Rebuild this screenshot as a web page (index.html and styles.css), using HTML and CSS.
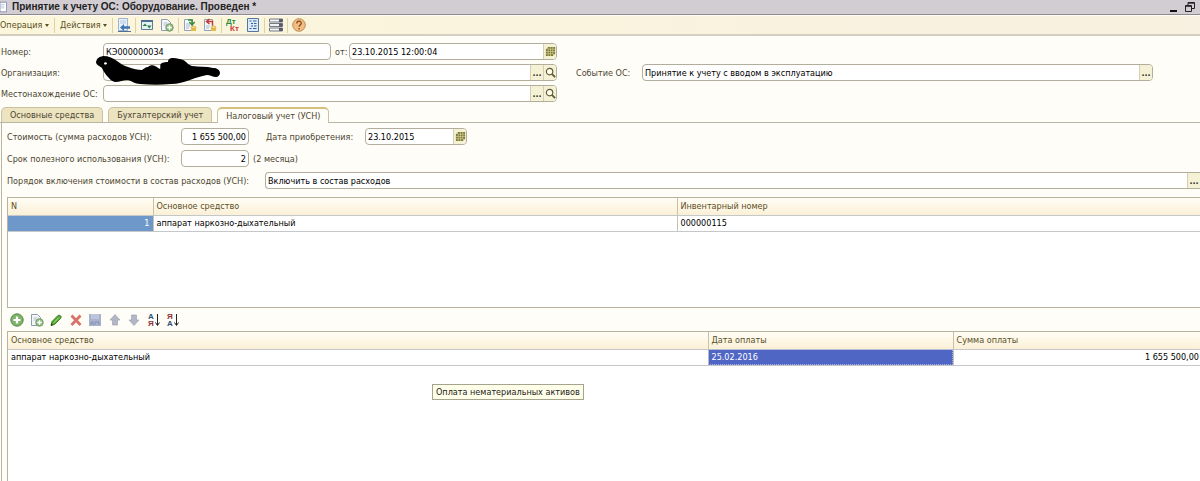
FILE: index.html
```html
<!DOCTYPE html>
<html lang="ru">
<head>
  <meta charset="UTF-8">
  <meta name="viewport" content="width=device-width, initial-scale=1.0">
  <title>Принятие к учету ОС</title>
  <link rel="stylesheet" href="styles.css">
</head>
<body>

  <svg class="symbols">
    <symbol id="calendar" viewBox="0 0 12 12">
      <path d="M3 1h8v8h-2v2H1V3h2z" fill="#7d7a3a"/>
      <path d="M1 6h10M1 8.500h8M3.500 3v8M6 1v10M8.500 1v8M3 3.500h8" stroke="#d8d39a" stroke-width=".7"/>
    </symbol>
    <symbol id="lens" viewBox="0 0 12 12">
      <circle cx="5" cy="5" r="3.500" fill="#fffef0" stroke="#5f5c34" stroke-width="1.300"/>
      <path d="M7.500 7.500 11 11" stroke="#5f5c34" stroke-width="2"/>
    </symbol>
    <symbol id="copy" viewBox="0 0 14 14">
      <path d="M1.500 1.500h6l3 3v8h-9z" fill="#f4f6fa" stroke="#8e9bb0"/>
      <path d="M3.500 5h4M3.500 7h3" stroke="#b4bdcc"/>
      <circle cx="9.500" cy="9.500" r="3.800" fill="#8fb981" stroke="#6b945f" stroke-width=".8"/>
      <path d="M9.500 7.200v4.600M7.200 9.500h4.600" stroke="#fff" stroke-width="1.500"/>
    </symbol>
  </svg>

  <header class="titlebar">
    <svg class="doc" viewBox="0 0 8 12"><path d="M0 .5h7.500v11H0z" fill="#fff" stroke="#7b8cab"/><path d="M0 3h5M0 5h5M0 7h5" stroke="#b9c7dc"/></svg>
    <h1>Принятие к учету ОС: Оборудование. Проведен *</h1>
    <button class="win" aria-label="Свернуть"><svg viewBox="0 0 12 12"><path d="M2 10h7" stroke="#111" stroke-width="2"/></svg></button>
    <button class="win" aria-label="Восстановить"><svg viewBox="0 0 12 12"><path d="M4 4V1.500h6.500v6H8M4 2.200h6.500" fill="none" stroke="#222"/><path d="M1.500 4.500h6v6h-6zM1.500 5.300h6" fill="none" stroke="#222"/></svg></button>
  </header>

  <nav class="toolbar">
    <button class="menu first">Операция <i></i></button>
    <span class="sep"></span>
    <button class="menu">Действия <i></i></button>
    <span class="sep"></span>
    <button class="tool" aria-label="Найти в списке"><svg viewBox="0 0 14 14"><path d="M1.500.5h9v12h-9z" fill="#e8f0fa" stroke="#9db3cf"/><path d="M3 3h6M3 5h6" stroke="#b7c8dd"/><path d="M3 9.500 7 6v2.300h6v2.400H7V13z" fill="#3d74b4"/><path d="M1 13.500h13" stroke="#4f6f98"/></svg></button>
    <span class="sep"></span>
    <button class="tool" aria-label="Перечитать"><svg viewBox="0 0 14 14"><path d="M1.500 2.500h11v9h-11z" fill="#e6f4f1" stroke="#5b7d98"/><path d="M1 3h12" stroke="#4a6f92" stroke-width="2"/><path d="M2.500 8 5 5.500 7 8zM7 7.500h4.500L9.300 10.500z" fill="#2b7b51"/></svg></button>
    <button class="tool" aria-label="Скопировать"><svg><use href="#copy"/></svg></button>
    <span class="sep"></span>
    <button class="tool" aria-label="Провести"><svg viewBox="0 0 14 14"><path d="M1.500 1.500h8v11h-8z" fill="#f5f8fc" stroke="#90a2bb"/><path d="M3 6h4M3 8h4M3 10h3" stroke="#a9b8cb"/><path d="M5 2h4v3.500M6.300 4 9 7l2.700-3" fill="none" stroke="#3a8d3a" stroke-width="1.500"/><path d="M8 9.500h5v3.500H8z" fill="#e5bd46"/><ellipse cx="10.500" cy="9.300" rx="2.500" ry="1.200" fill="#f6df88" stroke="#c59a30" stroke-width=".6"/></svg></button>
    <button class="tool" aria-label="Отмена проведения"><svg viewBox="0 0 14 14"><path d="M1.500 1.500h8v11h-8z" fill="#f5f8fc" stroke="#90a2bb"/><path d="M3 8h4M3 10h3" stroke="#a9b8cb"/><path d="M9.500 7.500V3.500H4M6.500 1 3.500 3.500l3 2.500" fill="none" stroke="#c93a2e" stroke-width="1.500"/><path d="M8 9.500h5v3.500H8z" fill="#e5bd46"/><ellipse cx="10.500" cy="9.300" rx="2.500" ry="1.200" fill="#f6df88" stroke="#c59a30" stroke-width=".6"/></svg></button>
    <span class="sep"></span>
    <button class="tool" aria-label="Проводки"><svg viewBox="0 0 14 14"><text x="0" y="6" class="glyph green">Дт</text><text x="4" y="13" class="glyph red">Кт</text></svg></button>
    <button class="tool" aria-label="Список"><svg viewBox="0 0 14 14"><path d="M1.500.5h11v13h-11z" fill="#dceafa" stroke="#54779f"/><path d="M3.500 3h2M7 3h3.500M5 5.500h2M8 5.500h2.500M5 8h2M8 8h2.500M3.500 10.500h2M7 10.500h3.500" stroke="#2f639b"/></svg></button>
    <span class="sep"></span>
    <button class="tool" aria-label="Реквизиты"><svg viewBox="0 0 14 14"><path d="M.5 1h13v3H.5zM.5 5.500h13v3H.5zM.5 10h13v3H.5z" fill="#f2f2f4" stroke="#777b88"/><path d="M10 1h3.500v3H10zM10 5.500h3.500v3H10zM10 10h3.500v3H10z" fill="#555a68"/></svg></button>
    <span class="sep"></span>
    <button class="tool" aria-label="Справка"><svg viewBox="0 0 14 14"><circle cx="7" cy="7" r="6.300" fill="#f0bd82" stroke="#b98650" stroke-width=".9"/><path d="M4.800 5.500c0-3 4.600-3 4.500-.2C9.300 7 7.100 6.800 7.100 8.800M7.100 10v1.500" fill="none" stroke="#8a4c1c" stroke-width="1.300"/></svg></button>
  </nav>

  <main>
    <section class="head">
      <div class="row">
        <label class="caption" for="number">Номер:</label>
        <div class="field number"><input id="number" value="КЭ000000034"></div>
        <label class="from" for="date">от:</label>
        <div class="field rest"><input id="date" value="23.10.2015 12:00:04"><button aria-label="Календарь"><svg><use href="#calendar"/></svg></button></div>
      </div>
      <div class="row">
        <label class="caption" for="org">Организация:</label>
        <div class="field rest"><input id="org"><button>...</button><button aria-label="Открыть"><svg><use href="#lens"/></svg></button></div>
        <svg class="scribble" viewBox="0 0 128 30"><path fill="#000" fill-rule="evenodd" d="M2 6C3 2 5 1 9 0c6 0 10 2 14 5 4 3 7 5 11 6 5 2 10 3 14 3 2-1 3-3 6-3 2-2 5-2 7-1 2 1 3 2 5 3 1-1-1-5 2-6 2-1 4-1 6-1 0-3 2-4 5-4 4 0 7 1 10 2 3 1 5 5 9 6 7 1 14 0 21 2 4 0 7 2 7 5 0 2-2 4-4 4-3 0-6-2-9-2-6 1-12 3-17 5-6 2-12 4-19 4-10 1-20 1-31 0-5 0-8-3-12-4-5 0-8 2-13 2-4-1-5-3-8-6-2-3-4-5-5-8C6 10 2 9 2 6zM10 8c1 1 3 1 3-1-1-1-3-1-3 1z"/></svg>
      </div>
      <div class="row">
        <label class="caption" for="place">Местонахождение ОС:</label>
        <div class="field rest"><input id="place"><button>...</button><button aria-label="Открыть"><svg><use href="#lens"/></svg></button></div>
      </div>
    </section>
    <section class="event row">
      <label for="event">Событие ОС:</label>
      <div class="field rest"><input id="event" value="Принятие к учету с вводом в эксплуатацию"><button>...</button></div>
    </section>
  </main>

  <div class="tabs">
    <button class="tab">Основные средства</button>
    <button class="tab">Бухгалтерский учет</button>
    <button class="tab active">Налоговый учет (УСН)</button>
  </div>

  <section class="panel">
    <div class="row">
      <label class="caption" for="cost">Стоимость (сумма расходов УСН):</label>
      <div class="field sum"><input id="cost" value="1 655 500,00"></div>
      <label class="buy" for="bought">Дата приобретения:</label>
      <div class="field day"><input id="bought" value="23.10.2015"><button aria-label="Календарь"><svg><use href="#calendar"/></svg></button></div>
    </div>
    <div class="row">
      <label class="caption" for="term">Срок полезного использования (УСН):</label>
      <div class="field sum"><input id="term" value="2"></div>
      <span>(2 месяца)</span>
    </div>
    <div class="row">
      <label class="order" for="order">Порядок включения стоимости в состав расходов (УСН):</label>
      <div class="field rest cut"><input id="order" value="Включить в состав расходов"><button>...</button></div>
    </div>

    <div class="grid assets">
      <table>
        <thead>
          <tr><th class="col-n">N</th><th class="col-name">Основное средство</th><th>Инвентарный номер</th></tr>
        </thead>
        <tbody>
          <tr><td class="num current">1</td><td>аппарат наркозно-дыхательный</td><td>000000115</td></tr>
        </tbody>
      </table>
    </div>

    <div class="commands">
      <button class="tool" aria-label="Добавить"><svg viewBox="0 0 14 14"><circle cx="7" cy="7" r="6.200" fill="#7fb46c" stroke="#568a4a"/><path d="M7 3.500v7M3.500 7h7" stroke="#fff" stroke-width="2.200"/></svg></button>
      <button class="tool" aria-label="Скопировать"><svg><use href="#copy"/></svg></button>
      <button class="tool" aria-label="Изменить"><svg viewBox="0 0 14 14"><path d="M2 12.500 3 8.500 9 2.500q2-1 3 1 .5 1-.5 2L5.500 11.500z" fill="#55a832" stroke="#2f7420" stroke-width=".9"/><path d="M5 9.500 10 4.500" stroke="#b6e48e"/><path d="M2 12.500 2.500 10.500 4 12z" fill="#222"/></svg></button>
      <button class="tool" aria-label="Удалить"><svg viewBox="0 0 14 14"><path d="M2.500 2.500 11.500 12M11.500 2.500 2.500 12" stroke="#d8736a" stroke-width="2.800"/></svg></button>
      <button class="tool" aria-label="Закончить редактирование"><svg viewBox="0 0 14 14"><path d="M1 1h12v12H1z" fill="#a9b3cd"/><path d="M3 1h8v5H3z" fill="#bcc5da"/><path d="M3 12V9h2v3M7 12V9h4v3" fill="none" stroke="#8491b3"/></svg></button>
      <button class="tool" aria-label="Вверх"><svg viewBox="0 0 14 14"><path d="M7 1.500 12 7H9.500v5h-5V7H2z" fill="#b3b6c4" stroke="#9fa3b4" stroke-width=".7"/></svg></button>
      <button class="tool" aria-label="Вниз"><svg viewBox="0 0 14 14"><path d="M7 12.500 12 7H9.500V2h-5v5H2z" fill="#b3b6c4" stroke="#9fa3b4" stroke-width=".7"/></svg></button>
      <button class="tool" aria-label="Сортировать по возрастанию"><svg viewBox="0 0 14 14"><text x="1" y="6" class="glyph blue">А</text><text x="1" y="13" class="glyph maroon">Я</text><path d="M10.500 1v11M8.500 9.500l2 3 2-3" fill="none" stroke="#222"/></svg></button>
      <button class="tool" aria-label="Сортировать по убыванию"><svg viewBox="0 0 14 14"><text x="1" y="6" class="glyph maroon">Я</text><text x="1" y="13" class="glyph blue">А</text><path d="M10.500 1v11M8.500 9.500l2 3 2-3" fill="none" stroke="#222"/></svg></button>
    </div>

    <div class="grid payments">
      <table>
        <thead>
          <tr><th>Основное средство</th><th class="col-date">Дата оплаты</th><th class="col-sum">Сумма оплаты</th></tr>
        </thead>
        <tbody>
          <tr><td>аппарат наркозно-дыхательный</td><td class="selected">25.02.2016</td><td class="num">1 655 500,00</td></tr>
        </tbody>
      </table>
      <div class="tooltip" role="tooltip">Оплата нематериальных активов</div>
    </div>
  </section>

</body>
</html>
```
FILE: styles.css
```css
* {
  box-sizing: border-box;
}

body {
  margin: 0;
  min-height: 100vh;
  display: flex;
  flex-direction: column;
  overflow: hidden;
  background: #fffdf7;
  color: #4b4632;
  font: 9px/14px "DejaVu Sans Condensed", "Liberation Sans", sans-serif;
}

button, input {
  font: inherit;
  color: inherit;
  margin: 0;
  padding: 0;
  border: 0;
  background: none;
}

.symbols {
  display: none;
}

/* window title */
.titlebar {
  display: flex;
  align-items: center;
  height: 15px;
  background: #d2cdd2;
  border-bottom: 1px solid #8f8a8d;
}

.titlebar h1 {
  flex: 1;
  margin: 0 0 0 5px;
  font: bold 10px/14px "Liberation Sans", Arial, sans-serif;
  color: #222;
}

.doc {
  width: 7px;
  height: 12px;
}

.win {
  width: 16px;
  height: 12px;
}

.win svg {
  display: block;
  width: 12px;
  height: 12px;
}

/* toolbars */
.toolbar {
  display: flex;
  align-items: center;
  height: 21px;
  background: linear-gradient(to right, #fbf6dc, #f8f0e0);
  border-top: 1px solid #fffdf5;
  border-bottom: 2px solid #d3cfc0;
}

.menu {
  padding: 0 4px;
  white-space: nowrap;
  color: #5a5020;
}

.menu.first {
  padding-left: 0;
}

.menu i {
  display: inline-block;
  border: 2px solid transparent;
  border-top: 3px solid #5a5020;
  border-bottom: 0;
  vertical-align: middle;
}

.sep {
  width: 1px;
  height: 15px;
  margin: 0 1px;
  background: #ddd3a8;
}

.tool {
  width: 14px;
  height: 16px;
  display: flex;
  align-items: center;
  justify-content: center;
}

.toolbar .tool {
  width: 20px;
}

.tool svg {
  width: 14px;
  height: 14px;
}

.glyph {
  font: bold 8px "Liberation Sans", Arial, sans-serif;
}

.green { fill: #2c8a3a; }
.red { fill: #cb3a34; }
.blue { fill: #2d5277; }
.maroon { fill: #8f3139; }

/* fields */
main {
  display: flex;
  padding: 7px 47px 5px 1px;
}

.head {
  width: 556px;
  display: flex;
  flex-direction: column;
  gap: 4px;
}

.row {
  position: relative;
  display: flex;
  align-items: center;
  gap: 4px;
  white-space: nowrap;
}

.head .caption {
  width: 98px;
}

.field {
  display: flex;
  height: 17px;
  overflow: hidden;
  background: #fff;
  border: 1px solid #b3ae9c;
  border-radius: 4px;
}

.field input {
  flex: 1;
  min-width: 0;
  padding: 0 2px;
  color: #000;
  outline: none;
}

.field button {
  width: 13px;
  display: flex;
  align-items: center;
  justify-content: center;
  background: #f5f1d4;
  border-left: 1px solid #d4ceb2;
  color: #333;
  font-weight: bold;
}

.field svg {
  width: 11px;
  height: 11px;
}

.number {
  width: 228px;
}

.from {
  width: 10px;
}

.rest {
  flex: 1;
}

.event {
  flex: 1;
  align-self: center;
  margin-left: 19px;
}

.event label {
  width: 62px;
}

.scribble {
  position: absolute;
  left: 93px;
  top: -8px;
  width: 128px;
  height: 30px;
}

/* tabs */
.tabs {
  display: flex;
  gap: 5px;
  padding-left: 1px;
  border-bottom: 1px solid #b9b5a5;
}

.tab {
  height: 15px;
  padding: 0 8px;
  background: #ece3c0;
  border: 1px solid #c9c1a0;
  border-bottom: 0;
  border-radius: 5px 5px 0 0;
  white-space: nowrap;
}

.tab.active {
  margin-bottom: -1px;
  height: 16px;
  background: #fffdf7;
  border-top: 2px solid #d2c07c;
}

.panel {
  flex: 1;
  display: flex;
  flex-direction: column;
  gap: 5px;
  margin-left: 1px;
  padding: 5px 0 0 5px;
  border-left: 1px solid #b9b5a5;
}

.panel .caption {
  width: 170px;
}

.sum {
  width: 68px;
}

.sum input {
  text-align: right;
}

.buy {
  width: 95px;
  margin-left: 13px;
}

.day {
  width: 102px;
}

.order {
  width: 254px;
}

.cut {
  border-right: 0;
  border-radius: 4px 0 0 4px;
}

/* tables */
.grid {
  background: #fff;
  border: 1px solid #b7b39c;
  border-right: 0;
}

.assets {
  height: 111px;
  margin-top: 3px;
}

.payments {
  position: relative;
  flex: 1;
  border-bottom: 0;
}

table {
  width: 100%;
  table-layout: fixed;
  border-collapse: collapse;
}

th, td {
  padding: 1px 3px;
  border-right: 1px solid #c5c2b0;
  border-bottom: 1px solid #c5c8cb;
  text-align: left;
}

th {
  height: 17px;
  background: linear-gradient(#fffdf5, #fbf0d6);
  font-weight: normal;
  color: #5b5025;
}

td {
  height: 16px;
  padding: 0 3px;
  color: #000;
}

th:last-child, td:last-child {
  border-right: 0;
}

.num {
  text-align: right;
}

.payments .num {
  padding-right: 1px;
}

.col-n { width: 145px; }
.col-name { width: 524px; }
.col-date { width: 245px; }
.col-sum { width: 247px; }

td.current {
  background: #6f98ca;
  color: #fff;
}

td.selected {
  background: #5066c4;
  outline: 1px dotted #a9b1dd;
  outline-offset: -1px;
  color: #fff;
}

.commands {
  display: flex;
  justify-content: space-between;
  width: 170px;
  height: 13px;
  margin-left: 3px;
  align-items: center;
}

.tooltip {
  position: absolute;
  left: 424px;
  top: 52px;
  padding: 0 3px;
  background: #fffee8;
  border: 1px solid #a5a48e;
  color: #222;
  white-space: nowrap;
}
```
